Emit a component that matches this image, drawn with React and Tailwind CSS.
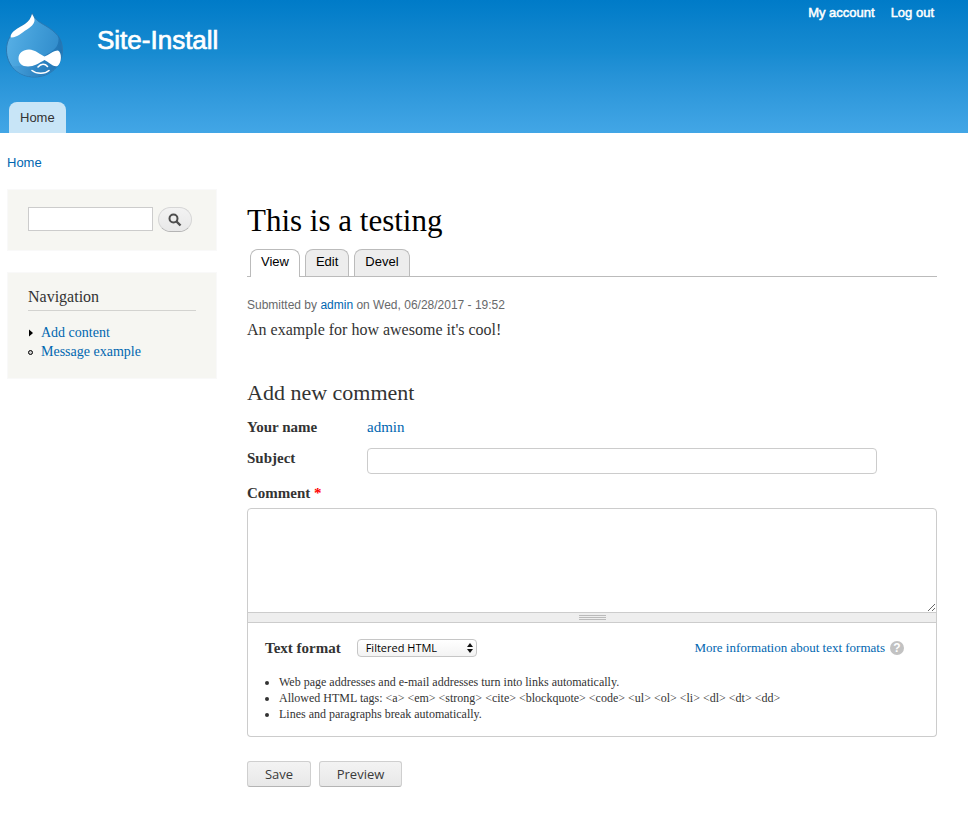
import React from 'react';

const sans = "font-['Liberation_Sans',Helvetica,Arial,sans-serif]";
const serif = "font-['Liberation_Serif',Georgia,'Times_New_Roman',serif]";
const ui = "font-['Open_Sans','Lucida_Grande',sans-serif]";

function Logo() {
  return (
    <svg width="64" height="70" viewBox="0 0 64 70" aria-hidden="true">
      <defs>
        <linearGradient id="drop" x1="0" y1="0.300" x2="1" y2="0.600">
          <stop offset="0" stopColor="#58b0e6" />
          <stop offset="0.5" stopColor="#419dd8" />
          <stop offset="1" stopColor="#2f8aca" />
        </linearGradient>
        <linearGradient id="shade" x1="0" y1="0" x2="1" y2="0">
          <stop offset="0" stopColor="#459fda" />
          <stop offset="0.5" stopColor="#2b80bf" />
          <stop offset="1" stopColor="#1d70b0" />
        </linearGradient>
      </defs>
      <path d="M32.500 3C34 9 39 12 46 16C55 21.500 62.500 28 62.500 40C62.500 56 50 67 34.500 67C18 67 6.500 55 6.500 40C6.500 30 11 23 20 17C27 13 31 10 32.500 3Z" fill="url(#drop)" stroke="#2a78b2" strokeWidth="1" />
      <path d="M58 25C60 34 56 40 47 44C38 52 24 57 12 56C18 64 25 66.500 34.500 66.500C50 66.500 62 56 62 40C62 34 61 29 58 25Z" fill="url(#shade)" opacity="0.8" />
      <path d="M32 4C33 6 35 8.500 34.500 11C34 14 31 17 27 19.500C21 23 18 27 11.500 27.500C9.500 27 11.500 23 14 21C18 17.500 22 16 25 14C29 11 31 8 32 4Z" fill="#fff" />
      <path d="M29 39.500C35 39.500 41 45 44.500 46.500C49 45 53 40.500 58 40.500C62 42 62 53 57.500 56C53 57.500 48 51.500 44.500 50C39 53 34 56.500 28 56.500C22 56.500 18.500 53 18.500 48.500C18.500 43 23 39.500 29 39.500Z" fill="#fff" />
      <path d="M38 57C41 53.500 45 53.500 47.500 56.500M32 60.500C37 64.500 45 64 49 60.500" fill="none" stroke="#fff" strokeWidth="1.600" strokeLinecap="round" />
    </svg>
  );
}

const link = 'text-[#0066b0]';
const label = 'w-[120px] shrink-0 text-[15px] leading-5 font-bold';
const button =
  'h-[26px] rounded-[3px] border border-[#cfcfcf] border-b-[#b4b4b4] bg-linear-to-b from-[#f3f3f3] to-[#e8e8e8] text-[13px] leading-5 text-[#3a3a3a]';

export default function App() {
  return (
    <div className={`min-h-screen bg-white text-[#333] ${serif}`}>
      <header className={`flex h-[133px] flex-col justify-between bg-linear-to-b from-[#007bc8] via-[#178bd1] via-40% to-[#42a6e6] ${sans}`}>
        <div className="flex">
          <a href="#home" aria-label="Site logo" className="pt-[10px]"><Logo /></a>
          <h1 className="ml-[33px] pt-6 text-[26px] leading-8 text-white">
            <a href="#home" className="[-webkit-text-stroke:0.7px_white]">Site-Install</a>
          </h1>
          <nav className="ml-auto flex gap-4 pt-[5px] pr-[34px] text-[13px] leading-4 text-white">
            <a href="#account" className="[-webkit-text-stroke:0.5px_white]">My account</a>
            <a href="#logout" className="[-webkit-text-stroke:0.5px_white]">Log out</a>
          </nav>
        </div>
        <nav className="ml-[9px] flex">
          <a href="#home" className="h-[31px] rounded-t-lg bg-[#c8e5f7] px-[11px] text-[13px] leading-[31px] text-[#333]">Home</a>
        </nav>
      </header>

      <nav aria-label="Breadcrumb" className={`pt-[22px] pl-[7px] text-[13px] leading-4 ${sans}`}>
        <a href="#home" className={link}>Home</a>
      </nav>

      <div className="flex gap-[30px] pt-[18px] pr-[31px] pb-10 pl-[7px]">
        <aside className="flex w-[210px] shrink-0 flex-col gap-[21px]">
          <form className="flex h-[62px] gap-[5px] border border-[#f9f9f9] bg-[#f6f6f2] px-5 pt-[17px]">
            <input aria-label="Search" className="h-6 w-[125px] border border-[#ccc] bg-white px-1 text-sm" />
            <button type="button" aria-label="Search" className="flex h-[25px] w-[34px] items-center justify-center rounded-full border border-[#d6d6d6] border-b-[#b4b4b4] bg-linear-to-b from-[#f3f3f3] to-[#e8e8e8]">
              <svg width="14" height="14" viewBox="0 0 14 14" fill="none" stroke="#4e4e4e" strokeWidth="2" aria-hidden="true">
                <circle cx="5.500" cy="5.500" r="4" />
                <path d="M8.500 8.500L12.500 12.500" strokeWidth="2.400" />
              </svg>
            </button>
          </form>
          <section className="border border-[#f9f9f9] bg-[#f6f6f2] px-5 pt-[14px] pb-[17px]">
            <h2 className="border-b border-[#d3d3d0] pb-[3px] text-[16px] leading-5">Navigation</h2>
            <ul className="pt-3 text-[14px] leading-[19px]">
              <li className="flex items-center gap-[7px]">
                <svg width="6" height="8" viewBox="0 0 6 8" aria-hidden="true"><path d="M1 0.500L5 4L1 7.500Z" fill="#000" /></svg>
                <a href="#add" className={link}>Add content</a>
              </li>
              <li className="flex items-center gap-[7px]">
                <svg width="6" height="8" viewBox="0 0 6 8" aria-hidden="true"><circle cx="2.500" cy="4.500" r="2" fill="#ccc" stroke="#000" /></svg>
                <a href="#message" className={link}>Message example</a>
              </li>
            </ul>
          </section>
        </aside>

        <main className="min-w-0 flex-1 pt-[14px]">
          <h1 className="text-[31px] leading-9 text-black">This is a testing</h1>
          <nav className={`mt-[10px] flex gap-[5px] border-b border-[#bbb] pl-[3px] text-[13px] leading-6 text-black ${sans}`}>
            <a href="#view" className="-mb-px h-7 rounded-t-lg border border-b-0 border-[#bbb] bg-white px-[10px]">View</a>
            <a href="#edit" className="h-[27px] rounded-t-lg border border-b-0 border-[#bbb] bg-[#ededed] px-[10px]">Edit</a>
            <a href="#devel" className="h-[27px] rounded-t-lg border border-b-0 border-[#bbb] bg-[#ededed] px-[10px]">Devel</a>
          </nav>

          <p className={`pt-5 text-[12px] leading-4 text-[#68696b] ${sans}`}>
            Submitted by <a href="#admin" className={link}>admin</a> on Wed, 06/28/2017 - 19:52
          </p>
          <p className="pt-[7px] text-[16px] leading-5">An example for how awesome it's cool!</p>

          <h2 className="pt-[39px] text-[22px] leading-7">Add new comment</h2>
          <form>
            <div className="flex pt-[10px]">
              <span className={label}>Your name</span>
              <a href="#admin" className={`text-[15px] leading-5 ${link}`}>admin</a>
            </div>
            <div className="flex pt-[11px]">
              <label htmlFor="subject" className={label}>Subject</label>
              <input id="subject" className="h-[26px] min-w-0 max-w-[510px] flex-1 rounded border border-[#ccc] bg-white px-2 text-sm" />
            </div>
            <label htmlFor="comment" className="mt-[9px] block text-[15px] leading-5 font-bold">
              Comment <span className="text-[#f00]">*</span>
            </label>
            <textarea id="comment" className="mt-[5px] block h-[105px] w-full resize rounded-t border border-[#ccc] bg-white p-2 text-sm" />
            <div className="-mt-px flex h-[11px] flex-col items-center justify-center gap-px border border-[#ccc] bg-[#eee]">
              <span className="h-px w-[27px] bg-[#bbb]" />
              <span className="h-px w-[27px] bg-[#bbb]" />
              <span className="h-px w-[27px] bg-[#bbb]" />
            </div>
            <section className="rounded-b border border-t-0 border-[#ccc] px-[17px] pt-[15px] pb-[14px]">
              <div className="flex items-center pr-[15px]">
                <label htmlFor="format" className="text-[15px] leading-5 font-bold">Text format</label>
                <div className="relative ml-4">
                  <select id="format" className={`block h-[18px] w-[120px] appearance-none rounded border border-[#c6c6c6] bg-linear-to-b from-white to-[#f3f3f3] pl-2 text-[11px] leading-4 text-black ${ui}`}>
                    <option>Filtered HTML</option>
                  </select>
                  <svg className="pointer-events-none absolute top-1 right-1" width="6" height="10" viewBox="0 0 6 10" aria-hidden="true">
                    <path d="M3 0L6 4H0ZM0 6H6L3 10Z" fill="#111" />
                  </svg>
                </div>
                <a href="#formats" className={`ml-auto flex items-center gap-[5px] text-[13px] leading-5 ${link}`}>
                  More information about text formats
                  <span className={`flex size-[14px] items-center justify-center rounded-full bg-[#c2c2c2] text-[12px] leading-[14px] font-bold text-white ${sans}`}>?</span>
                </a>
              </div>
              <ul className="list-disc pt-4 pl-[14px] text-[12px] leading-4">
                <li>Web page addresses and e-mail addresses turn into links automatically.</li>
                <li>{'Allowed HTML tags: <a> <em> <strong> <cite> <blockquote> <code> <ul> <ol> <li> <dl> <dt> <dd>'}</li>
                <li>Lines and paragraphs break automatically.</li>
              </ul>
            </section>
            <div className={`mt-6 flex gap-2 ${ui}`}>
              <button type="button" className={`${button} w-16`}>Save</button>
              <button type="button" className={`${button} w-[83px]`}>Preview</button>
            </div>
          </form>
        </main>
      </div>
    </div>
  );
}
